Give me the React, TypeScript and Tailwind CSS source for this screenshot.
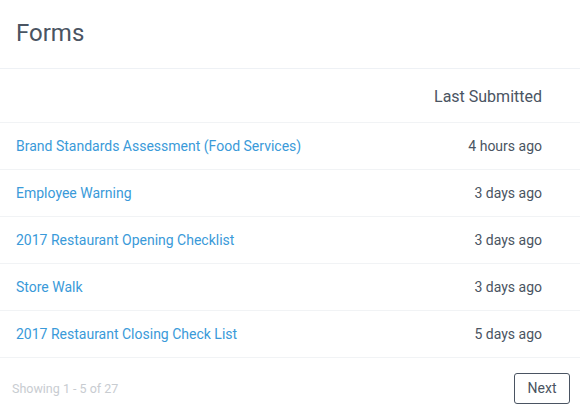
import React from "react";

const rows = [
  ["Brand Standards Assessment (Food Services)", "4 hours ago"],
  ["Employee Warning", "3 days ago"],
  ["2017 Restaurant Opening Checklist", "3 days ago"],
  ["Store Walk", "3 days ago"],
  ["2017 Restaurant Closing Check List", "5 days ago"],
];

export default function App() {
  return (
    <div className="w-[580px] h-[414px] bg-white flex flex-col" style={{ fontFamily: "Roboto, 'Liberation Sans', sans-serif" }}>
      <div className="h-[69px] flex items-center px-4 border-b border-[#eef1f5]">
        <h1 className="text-[24px] text-[#4a5462] pb-[2px]">Forms</h1>
      </div>
      <div className="h-[54px] flex items-center justify-end px-[38px] border-b border-[#f1f3f5]">
        <span className="text-[16px] text-[#4a5462] pt-[2px]">Last Submitted</span>
      </div>
      {rows.map(([name, time]) => (
        <div key={name} className="h-[47px] flex items-center justify-between pl-4 pr-[38px] border-b border-[#f1f3f5]">
          <a className="text-[14px] text-[#3a9ad9] pt-[1px]">{name}</a>
          <span className="text-[14px] text-[#4a5462] pt-[1px]">{time}</span>
        </div>
      ))}
      <div className="flex-1 flex items-center justify-between pl-3 pr-[10px] pt-[4px]">
        <span className="text-[12.5px] text-[#c8ccd1] pt-[3px]">Showing 1 - 5 of 27</span>
        <button className="w-[56px] h-[31px] border border-[#4a5462] rounded-[3px] text-[14px] text-[#4a5462]">Next</button>
      </div>
    </div>
  );
}
